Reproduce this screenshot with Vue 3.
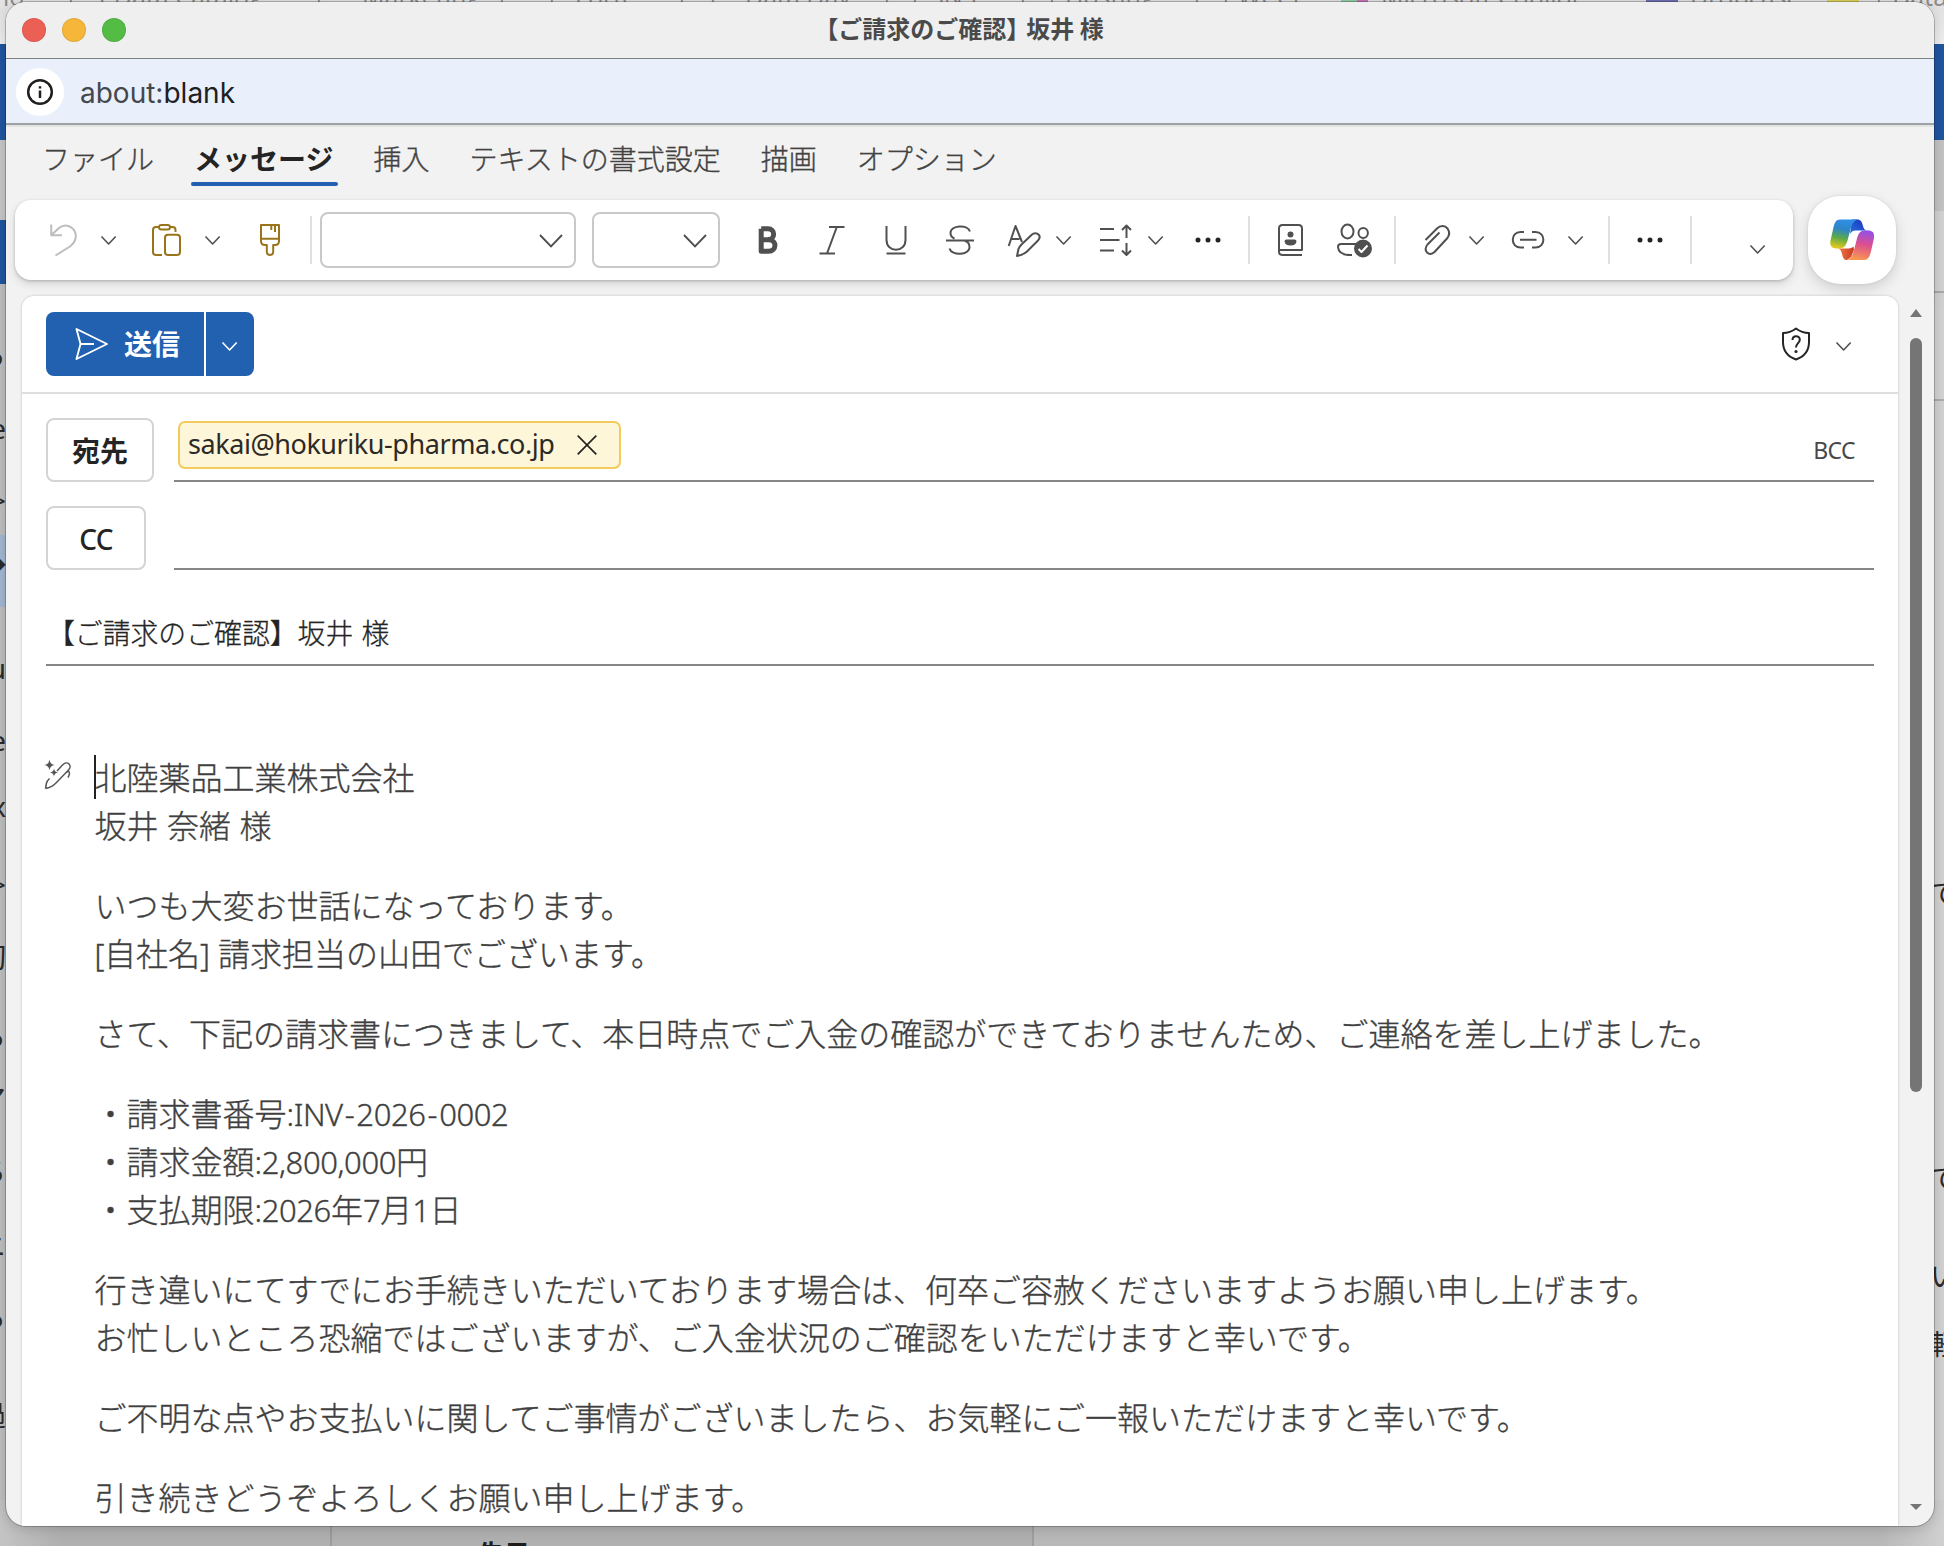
<script setup>
import { h } from 'vue'

const P = (d, o = {}) => ({ d, ...o })

const icons = {
  undo: { w: 28, h: 32, paths: [P('M1.2 .5V11.2H12M1.6 10.8L9 4C17-2.5 27 5 25.6 14C25 18 23 20 20 22.5L5.5 31.5')] },
  chevron: { w: 16, h: 10, sw: 1.6, paths: [P('M.5 1.500L7.600 9L14.700 1.500')] },
  paste: { w: 30, h: 32, paths: [
    P('M7 3H4Q1 3 1 6V28Q1 31 4 31H10M18 3H20.5Q23.500 3 23.5 6V8'),
    P('M9.500 1H15.500Q18 1 18 3.200T15.500 5.500H9.500Q7 5.500 7 3.200T9.500 1Z'),
    P('M16 10.800H25Q28 10.800 28 13.800V28Q28 31 25 31H16Q13 31 13 28V13.800Q13 10.800 16 10.800Z')] },
  brush: { w: 20, h: 32, paths: [P('M1 1H19V17Q19 21 15 21H13.200V28Q13 31 10 31Q7 31 6.800 28V21H5Q1 21 1 17ZM1 14.800H19M11.300 1V6M15 1V8')] },
  bold: { w: 20, h: 32, sw: 5, paths: [P('M3.200 4.800V27.200H10.500C19 27.200 19 15.800 11 15.800H3.200M3.200 4.800H10C17.500 4.800 17.500 15.500 10 15.500')] },
  italic: { w: 26, h: 32, paths: [P('M10 3H25.500M.5 29.500H16M17.800 3L8 29.500')] },
  underline: { w: 22, h: 32, paths: [P('M1.500 2V16C1.500 29 20.500 29 20.500 16V2M1.500 29.500H20.500')] },
  strike: { w: 28, h: 32, paths: [P('M0 16.500H28M24 7.500C21.500 0 4.500 1 4.500 9C4.500 12 6 13.500 8.500 14.500M3.500 24.500C5.500 32 23.500 31.500 23.500 23C23.500 19.500 21.500 17.500 18.500 16.500')] },
  textpen: { w: 32, h: 32, paths: [P('M.7 22L7.500 2L14 18M3.500 15H11.500'), P('M9 32L10.500 25C11 23 12 22 13.500 20.500L24 10.500C26 8.500 29 9 30.500 10.500C32 12 31.800 14.500 30 16.500L19 27.500C17 29.500 15.500 30.500 9 32Z')] },
  spacing: { w: 33, h: 32, paths: [P('M0 5H14M0 16H19.500M0 26.500H14M26.500 2V14M26.500 19V31M22 6L26.500 1.500L31 6M22 26.500L26.500 31L31 26.500')] },
  dots: { w: 26, h: 6, paths: [P('M.5 3a2.500 2.500 0 1 0 5 0a2.500 2.500 0 1 0-5 0M10.500 3a2.500 2.500 0 1 0 5 0a2.500 2.500 0 1 0-5 0M20.500 3a2.500 2.500 0 1 0 5 0a2.500 2.500 0 1 0-5 0', { solid: true })] },
  contact: { w: 26, h: 32, paths: [
    P('M24 31H4.500Q1 31 1 27.500V4.500Q1 1 4.500 1H20.500Q24 1 24 4.500V26H1.500'),
    P('M9.500 10.500a3 3 0 1 0 6 0a3 3 0 1 0-6 0M8.500 15.500H16.500Q18.500 15.500 18.500 17.500Q18 21.500 12.500 21.500T6.500 17.500Q6.500 15.500 8.500 15.500Z', { solid: true })] },
  people: { w: 36, h: 34, paths: [
    P('M4.500 8.500a6 7 0 1 0 12 0a6 7 0 1 0-12 0M21.500 10a4.700 5 0 1 0 9.400 0a4.700 5 0 1 0-9.400 0M19 21H4Q1 21 1 24Q1.500 32.500 15 32M22 20.500H28'),
    P('M17 25.500a9 9 0 1 0 18 0a9 9 0 1 0-18 0', { solid: true }),
    P('M21.500 26L24.500 29L30.500 22.500', { white: true })] },
  attach: { w: 26, h: 32, paths: [P('M1.500 16L13 4.500C16.500 1 21 1.500 23.500 4.500C26 8 25.500 11.500 23 14.500L10.500 28C8 30.500 5 30.500 3 28.500C1 26 1.500 23 3.500 20.500L15.500 8.500')] },
  link: { w: 34, h: 18, paths: [P('M12 1H8.500C-1.800 1-1.800 16.500 8.500 16.500H12M20 1H23.500C34 1 34 16.500 23.500 16.500H20M8 8.800H24.500')] },
  send: { w: 34, h: 32, sw: 1.9, paths: [P('M1.500 1L32 16L1.500 31L5.500 16ZM5.500 16H19')] },
  close: { w: 20, h: 20, sw: 1.700, paths: [P('M.7 .7L19.300 19.300M19.300 .7L.7 19.300')] },
  info: { w: 28, h: 28, sw: 2.500, paths: [P('M2.200 14a11.800 11.800 0 1 0 23.600 0a11.800 11.800 0 1 0-23.600 0M14 12.500V20M14 8.200V10.600')] },
  shield: { w: 30, h: 34, sw: 2, paths: [P('M15 1.500C19 4.500 23 6 28 6V15C28 24 23.500 29.500 15 32.500C6.500 29.500 2 24 2 15V6C7 6 11 4.500 15 1.500ZM11.500 13C11.500 8 18.800 8 18.800 12.800C18.800 16 15 16.500 15 20.500'), P('M13.400 24.500a1.600 1.600 0 1 0 3.200 0a1.600 1.600 0 1 0-3.200 0', { solid: true })] },
  magic: { w: 30, h: 32, sw: 1.500, paths: [
    P('M2.500 29.500L3.500 24C4 22 5 21 6.500 19.500M14 12L19.500 6C22 3.500 24.500 3.500 26 5C27.500 6.500 27.500 9 25.500 11L13 24C10.500 26.500 8.500 28.500 2.500 29.500M22 14.500L25.500 12C27 13.500 26.500 16 25 18.500'),
    P('M6.500 .5C7 4 8.500 5.500 12 6C8.500 6.500 7 8 6.500 11.500C6 8 4.500 6.500 1 6C4.500 5.500 6 4 6.500 .5ZM11 9.500C11.300 12 12.500 13 15 13.500C12.500 14 11.300 15 11 17.500C10.700 15 9.500 14 7 13.500C9.500 13 10.700 12 11 9.500Z', { solid: true })] },
}

const tools = [
  { icon: 'undo', gap: 35, cls: 'dim' }, { icon: 'chevron', gap: 23 },
  { icon: 'paste', gap: 35, cls: 'gold' }, { icon: 'chevron', gap: 23 },
  { icon: 'brush', gap: 39, cls: 'gold' }, { divider: true, gap: 30 },
  { select: 'font', gap: 8 }, { select: 'size', gap: 16 },
  { icon: 'bold', gap: 38 }, { icon: 'italic', gap: 41 }, { icon: 'underline', gap: 40 }, { icon: 'strike', gap: 39 },
  { icon: 'textpen', gap: 34 }, { icon: 'chevron', gap: 16 },
  { icon: 'spacing', gap: 28 }, { icon: 'chevron', gap: 15 },
  { icon: 'dots', gap: 31, cls: 'dark' }, { divider: true, gap: 27 },
  { icon: 'contact', gap: 28 }, { icon: 'people', gap: 33 }, { divider: true, gap: 21 },
  { icon: 'attach', gap: 28 }, { icon: 'chevron', gap: 19 },
  { icon: 'link', gap: 27 }, { icon: 'chevron', gap: 22 }, { divider: true, gap: 24 },
  { icon: 'dots', gap: 27, cls: 'dark' }, { divider: true, gap: 27 },
  { icon: 'chevron', gap: 58, cls: 'low' },
]

const tabs = ['ファイル', 'メッセージ', '挿入', 'テキストの書式設定', '描画', 'オプション']

const bookmarks = [
  { t: 'lo', x: 3 }, { t: '|', x: 64 }, { t: '( Data Catalog', x: 100 }, { t: '|', x: 312 }, { t: 'Marketing', x: 362 },
  { t: '|', x: 495 }, { t: '|', x: 545 }, { t: 'Forte', x: 575 }, { t: '|', x: 675 }, { t: '|', x: 706 }, { t: 'Data Day', x: 745 },
  { t: '|', x: 880 }, { t: '|', x: 908 }, { t: 'SNS', x: 930 }, { t: '|', x: 1016 }, { t: '|', x: 1045 }, { t: 'Hosting', x: 1065 },
  { t: '|', x: 1190 }, { t: '|', x: 1219 }, { t: 'WCCF', x: 1238 }, { t: 'Microsoft Copilot', x: 1381 }, { t: 'Dropcase', x: 1690 }, { t: '| Data', x: 1872 },
]
const leftBits = [['ら', 355], ['e', 428], ['>', 500], ['◆', 565], ['u', 668], ['e', 740], ['x', 806], ['>', 884], ['切', 957], ['る', 1036], ['マ', 1098], ['ち', 1171], ['ニ', 1246], ['る', 1317], ['過', 1415]]
const rightBits = [['で', 893], ['で', 1178], ['い', 1276], ['軽', 1344]]

const body = [
  [['北陸薬品工業株式会社'], ['坂井', ' ', '奈緒', ' ', '様']],
  [['いつも大変お世話になっております。'], ['[', '自社名', '] ', '請求担当の山田でございます。']],
  [['さて、下記の請求書につきまして、本日時点でご入金の確認ができておりませんため、ご連絡を差し上げました。']],
  [['・請求書番号', ':INV', '-', '2026', '-', '0002'], ['・請求金額', ':2,800,000', '円'], ['・支払期限', ':2026', '年', '7', '月', '1', '日']],
  [['行き違いにてすでにお手続きいただいております場合は、何卒ご容赦くださいますようお願い申し上げます。'], ['お忙しいところ恐縮ではございますが、ご入金状況のご確認をいただけますと幸いです。']],
  [['ご不明な点やお支払いに関してご事情がございましたら、お気軽にご一報いただけますと幸いです。']],
  [['引き続きどうぞよろしくお願い申し上げます。']],
]
const isLatin = (s) => /^[\x20-\x7e]+$/.test(s)

const Icon = (props) => {
  const ic = icons[props.name]
  return h('svg', { class: 'icon', width: ic.w, height: ic.h, viewBox: `0 0 ${ic.w} ${ic.h}` },
    ic.paths.map((p) => h('path', {
      d: p.d,
      fill: p.solid ? 'currentColor' : 'none',
      stroke: p.solid ? 'none' : p.white ? '#fff' : 'currentColor',
      'stroke-width': ic.sw || 2,
      'stroke-linejoin': 'round',
      'stroke-linecap': 'butt',
    })))
}
Icon.props = ['name']
</script>

<template>
  <div class="desktop">
    <div class="backdrop" aria-hidden="true">
      <span v-for="(b, i) in bookmarks" :key="'b' + i" class="bookmark" :style="{ left: b.x + 'px' }">{{ b.t }}</span>
      <i class="fav green"></i><i class="fav pink"></i><i class="fav indigo"></i><i class="fav yellow"></i>
      <i class="band blue top"></i><i class="band grey"></i><i class="band blue mid"></i><i class="band sel"></i>
      <i class="rband blue"></i><i class="rband a"></i><i class="rband b"></i><i class="rband c"></i>
      <span v-for="(b, i) in leftBits" :key="'l' + i" class="bit left" :style="{ top: b[1] - 20 + 'px' }">{{ b[0] }}</span>
      <span v-for="(b, i) in rightBits" :key="'r' + i" class="bit right" :style="{ top: b[1] - 20 + 'px' }">{{ b[0] }}</span>
      <i class="below"></i>
      <span class="below-text">先日</span>
    </div>

    <main class="window">
      <header class="titlebar">
        <div class="lights"><i class="red"></i><i class="amber"></i><i class="green"></i></div>
        <h1>【ご請求のご確認】<span>坂井 様</span></h1>
      </header>
      <div class="address">
        <span class="info"><Icon name="info" /></span>
        <span class="url"><em>about:</em>blank</span>
      </div>

      <div class="client">
        <nav class="tabs">
          <a v-for="(t, i) in tabs" :key="t" :class="{ active: i === 1 }">{{ t }}</a>
        </nav>

        <div class="ribbon">
          <div class="toolbar">
            <template v-for="(t, i) in tools" :key="i">
              <span v-if="t.divider" class="divider" :style="{ marginLeft: t.gap + 'px' }"></span>
              <span v-else-if="t.select" class="select" :class="t.select" :style="{ marginLeft: t.gap + 'px' }">
                <svg width="24" height="14" viewBox="0 0 24 14"><path d="M1 1L12 12.500L23 1" fill="none" stroke="#505050" stroke-width="1.900" /></svg>
              </span>
              <span v-else class="tool" :class="t.cls" :style="{ marginLeft: t.gap + 'px' }"><Icon :name="t.icon" /></span>
            </template>
          </div>
          <button class="copilot">
            <svg width="45" height="42" viewBox="0 0 45 42">
              <defs>
                <linearGradient id="cpL" x1=".6" y1="0" x2=".4" y2="1">
                  <stop offset="0" stop-color="#2f8fe8" /><stop offset=".35" stop-color="#2e86c8" /><stop offset=".65" stop-color="#5aa84a" /><stop offset="1" stop-color="#e2c81c" />
                </linearGradient>
                <linearGradient id="cpR" x1=".6" y1="0" x2=".4" y2="1">
                  <stop offset="0" stop-color="#9450e6" /><stop offset=".45" stop-color="#dd4f8e" /><stop offset="1" stop-color="#f9994f" />
                </linearGradient>
                <linearGradient id="cpB" x1="0" y1="1" x2="1" y2="0">
                  <stop offset="0" stop-color="#2a6fe0" /><stop offset="1" stop-color="#1632b8" />
                </linearGradient>
                <linearGradient id="cpO" x1="0" y1="0" x2="1" y2="0">
                  <stop offset="0" stop-color="#f07a45" /><stop offset="1" stop-color="#c93a24" />
                </linearGradient>
              </defs>
              <path fill="url(#cpB)" d="M22 .5H27C31 .5 32 3 33 7C33.700 10 35 11.500 38 11.500H25.500C23 11.500 21.500 12.500 20 15Z" />
              <path fill="url(#cpO)" d="M8 29.500H17C20 29.500 22 29 23.500 27.500L24 31L21 38L17 41C14 41 13 39 12 35C11.300 32 10.500 30 8 29.500Z" />
              <path fill="url(#cpL)" d="M10 .5H28C23.500 1.500 21.500 6 20.300 11L17.500 21.500C16 27 13.500 29.500 9 29.500H6.500C1 29.500-.5 26 .6 21L3.200 9.500C4.600 3.500 6 .5 10 .5Z" />
              <path fill="url(#cpR)" d="M35 11.500H38C43.500 11.500 44.800 15 43.800 20L41.200 31.500C39.800 38 38 41 34 41H17C21 40 23 35.500 24.200 30.500L27 19.500C28.500 14 30.500 11.500 35 11.500Z" />
            </svg>
          </button>
        </div>

        <div class="scroller">
          <section class="compose">
            <div class="actions">
              <div class="send">
                <button class="send-main"><Icon name="send" /><span>送信</span></button>
                <button class="send-more"><Icon name="chevron" /></button>
              </div>
              <div class="protect"><Icon name="shield" /><Icon name="chevron" /></div>
            </div>

            <div class="row to">
              <button class="label">宛先</button>
              <div class="field">
                <span class="chip"><span class="addr">sakai@hokuriku-pharma.co.jp</span><Icon name="close" /></span>
                <span class="bcc">BCC</span>
              </div>
            </div>
            <div class="row cc">
              <button class="label">CC</button>
              <div class="field"></div>
            </div>
            <div class="subject">【ご請求のご確認】坂井 様</div>

            <div class="editor">
              <span class="magic"><Icon name="magic" /></span>
              <i class="caret"></i>
              <p v-for="(para, i) in body" :key="i">
                <span v-for="(line, j) in para" :key="j" class="line"><span v-for="(s, k) in line" :key="k" :class="{ latin: isLatin(s), dash: s === '-' }">{{ s }}</span></span>
              </p>
            </div>
          </section>
          <div class="scrollbar">
            <svg width="12" height="8" viewBox="0 0 12 8"><path d="M6 0L12 8H0Z" fill="#757575" /></svg>
            <div class="thumb"></div>
            <svg class="down" width="12" height="6" viewBox="0 0 12 6"><path d="M6 6L0 0H12Z" fill="#757575" /></svg>
          </div>
        </div>
      </div>
    </main>
  </div>
</template>

<style scoped>
.desktop {
  position: relative;
  width: 1944px;
  height: 1546px;
  overflow: hidden;
  background: #c6c6c6;
  font-family: "Noto Sans", "Noto Sans CJK JP", sans-serif;
  color: #242424;
}
.backdrop {
  position: absolute;
  inset: 0;
  background: linear-gradient(#e3e3e3 0 10px, #f0f0f0 44px, transparent 44px),
    linear-gradient(90deg, #bfbfbf 0 50%, #d2d2d2 50%);
}
.bookmark {
  position: absolute;
  top: -20px;
  font: 25px/32px "Open Sans", sans-serif;
  color: #8b8b8b;
  white-space: nowrap;
}
.fav { position: absolute; top: 0; height: 7px; }
.fav.green { left: 1341px; width: 16px; background: #93cba4; }
.fav.pink { left: 1357px; width: 11px; background: #c876bd; }
.fav.indigo { left: 1646px; width: 32px; background: #6f70b4; }
.fav.yellow { left: 1827px; width: 32px; background: #dcd45f; }
.band, .rband { position: absolute; left: 0; width: 8px; }
.rband { left: 1932px; width: 12px; }
.band.blue, .rband.blue { background: #2155a0; }
.band.top { top: 44px; height: 96px; }
.band.grey { top: 140px; height: 80px; background: #c8c8c8; }
.band.mid { top: 220px; height: 64px; }
.band.sel { top: 535px; height: 72px; background: #a3b9d2; }
.rband.blue { top: 44px; height: 96px; }
.rband.a { top: 140px; height: 71px; background: #c4c4c4; }
.rband.b { top: 211px; height: 80px; background: #d3d3d3; border-bottom: 2px solid #a9a9a9; }
.rband.c { top: 307px; height: 92px; background: #d4d4d4; border-bottom: 2px solid #adadad; }
.bit {
  position: absolute;
  font-size: 28px;
  line-height: 40px;
  color: #2b2b2b;
}
.bit.left { right: 1938px; }
.bit.right { left: 1930px; }
.below {
  position: absolute;
  left: 0;
  right: 0;
  top: 1500px;
  bottom: 0;
  background: linear-gradient(90deg, #c4c4c4, #b0b0b0 60px, #b0b0b0 330px, transparent 330px),
    linear-gradient(90deg, transparent 330px, #9b9b9b 330px 332px, #b0b0b0 332px 1032px, #9e9e9e 1032px 1034px, #b8b8b8 1034px 1880px, #d0d0d0);
}
.below-text {
  position: absolute;
  left: 478px;
  top: 1535px;
  font: bold 26px/36px "Noto Sans CJK JP", sans-serif;
  color: #1c1c1c;
}

.window {
  position: absolute;
  left: 6px;
  top: 2px;
  width: 1928px;
  height: 1524px;
  border-radius: 20px;
  overflow: hidden;
  background: #f2f2f2;
  box-shadow: 0 0 0 1px rgba(0, 0, 0, .22), 0 2px 14px rgba(0, 0, 0, .18);
  display: flex;
  flex-direction: column;
}
.titlebar {
  flex: none;
  height: 56px;
  display: flex;
  align-items: center;
  background: #efefef;
  border-bottom: 1px solid #7b827f;
  position: relative;
}
.lights { display: flex; gap: 16px; padding-left: 16px; }
.lights i { width: 24px; height: 24px; border-radius: 50%; box-sizing: border-box; border: 1px solid rgba(0, 0, 0, .08); }
.lights .red { background: #ec5f54; }
.lights .amber { background: #f5b63a; }
.lights .green { background: #54bc45; }
.titlebar h1 {
  position: absolute;
  left: 0;
  right: 10px;
  top: 8px;
  margin: 0;
  text-align: center;
  font: bold 24px/36px "Noto Sans CJK JP", sans-serif;
  font-feature-settings: "halt";
  color: #4a4a4a;
}
.titlebar h1 span { margin-left: 8px; }
.address {
  flex: none;
  height: 64px;
  display: flex;
  align-items: center;
  background: #eaf0fb;
  border-bottom: 2px solid #9da1a6;
}
.info {
  width: 48px;
  height: 48px;
  margin: 2px 0 0 10px;
  border-radius: 50%;
  background: #fff;
  color: #1f1f1f;
  display: grid;
  place-items: center;
}
.url {
  margin: 3px 0 0 16px;
  font: 28px/40px Inter, sans-serif;
  color: #1d2025;
}
.url em { font-style: normal; color: #44484e; }

.client { flex: 1; display: flex; flex-direction: column; border-top: 2px solid #e2e4df; min-height: 0; }
.tabs {
  flex: none;
  height: 73px;
  display: flex;
  gap: 40px;
  padding-left: 36px;
  font: 28px/40px "Noto Sans CJK JP", sans-serif;
  color: #424242;
}
.tabs a { position: relative; margin-top: 11px; height: 50px; white-space: nowrap; font-weight: 300; -webkit-text-stroke: .35px currentColor; }
.tabs a.active { font-weight: 700; color: #242424; -webkit-text-stroke: 0; }
.tabs a.active::after {
  content: "";
  position: absolute;
  left: -3px;
  right: -5px;
  top: 44px;
  height: 4px;
  border-radius: 2px;
  background: #2360b1;
}
.ribbon { flex: none; display: flex; align-items: center; padding-left: 9px; height: 80px; }
.toolbar {
  flex: none;
  width: 1778px;
  height: 80px;
  border-radius: 16px;
  background: #fff;
  box-shadow: 0 1px 3px rgba(0, 0, 0, .2), 0 4px 8px rgba(0, 0, 0, .12);
  display: flex;
  align-items: center;
}
:deep(.icon) { flex: none; display: block; overflow: visible; }
.tool { flex: none; color: #505050; }
.tool.dim { color: #bdbdbd; }
.tool.gold { color: #99741a; }
.tool.dark { color: #242424; }
.tool.low { padding-top: 17px; }
.divider { flex: none; width: 2px; height: 48px; background: #e0e0e0; }
.select {
  flex: none;
  box-sizing: border-box;
  height: 56px;
  border: 2px solid #c9c9c9;
  border-radius: 8px;
  display: flex;
  align-items: center;
  justify-content: flex-end;
  padding: 2px 11px 0 0;
}
.select.font { width: 256px; }
.select.size { width: 128px; }
button { font: inherit; color: inherit; border: 0; margin: 0; padding: 0; background: none; }
.copilot {
  flex: none;
  width: 88px;
  height: 88px;
  margin-left: 15px;
  border-radius: 32px;
  background: #fff;
  box-shadow: 0 0 3px rgba(0, 0, 0, .1), 0 5px 14px rgba(0, 0, 0, .14);
  display: grid;
  place-items: center;
}

.scroller { flex: 1; min-height: 0; display: flex; margin-top: 16px; }
.compose {
  width: 1876px;
  margin-left: 16px;
  border-radius: 12px 12px 0 0;
  background: #fff;
  box-shadow: 0 0 3px rgba(0, 0, 0, .2);
  overflow: hidden;
}
.actions {
  height: 96px;
  border-bottom: 2px solid #dedede;
  display: flex;
  justify-content: space-between;
  padding: 0 46px 0 24px;
}
.send {
  margin-top: 16px;
  height: 64px;
  width: 208px;
  border-radius: 8px;
  overflow: hidden;
  background: #2260b0;
  color: #fff;
  display: flex;
}
.send-main { width: 160px; display: flex; align-items: center; padding-left: 29px; border-right: 2px solid #fff; font: bold 28px/40px "Noto Sans CJK JP", sans-serif; }
.send-main span { margin: -2px 0 0 15px; }
.send-more { flex: 1; display: grid; place-items: center; padding: 4px 1px 0 0; }
.protect { display: flex; align-items: center; gap: 25px; color: #242424; }
.protect .icon:last-child { margin-top: 3px; color: #505050; }
.row { display: flex; padding-left: 24px; padding-right: 24px; }
.row.to { margin-top: 24px; }
.row.cc { margin-top: 24px; }
.label {
  box-sizing: border-box;
  height: 64px;
  border: 2px solid #d4d4d4;
  border-radius: 8px;
  font: bold 28px/60px "Noto Sans CJK JP", sans-serif;
  color: #242424;
}
.to .label { width: 108px; margin-right: 20px; padding-bottom: 2px; }
.cc .label { width: 100px; margin-right: 28px; font: 500 28px/60px "Noto Sans", sans-serif; letter-spacing: -.8px; padding-top: 1px; }
.field {
  box-sizing: border-box;
  flex: 1;
  height: 64px;
  border-bottom: 2px solid #868686;
  display: flex;
  justify-content: space-between;
  align-items: flex-start;
}
.chip {
  box-sizing: border-box;
  margin: 3px 0 0 4px;
  width: 443px;
  height: 48px;
  border: 2px solid #f2cb5c;
  border-radius: 7px;
  background: #fef6d9;
  display: flex;
  align-items: center;
  padding-left: 8px;
  font: 27px/40px "Noto Sans", sans-serif;
}
.addr { width: 389px; margin-top: -2px; white-space: nowrap; letter-spacing: -.44px; color: #2c2a26; }
.bcc { margin: 16px 19px 0 0; font: 23px/32px "Noto Sans", sans-serif; letter-spacing: -.6px; color: #484848; }
.subject {
  box-sizing: border-box;
  margin: 32px 24px 0;
  height: 64px;
  border-bottom: 2px solid #868686;
  font: 300 27.850px/60px "Noto Sans CJK JP", sans-serif;
  padding-left: 1px;
  word-spacing: 2px;
  color: #242424;
  -webkit-text-stroke: .3px currentColor;
}
.editor { position: relative; padding: 86px 0 0 72.500px; color: #3f3f3f; font-weight: 300; font-size: 32px; line-height: 48px; font-family: "Noto Sans CJK JP", sans-serif; -webkit-text-stroke: .35px currentColor; }
.editor p { margin: 0 0 32px; }
.line { display: block; white-space: pre; height: 48px; }
.latin { font-family: "Noto Sans", sans-serif; font-weight: 300; font-size: 31px; letter-spacing: -.4px; word-spacing: .8px; }
.latin.dash { padding: 0 2px; }
.magic { position: absolute; left: 21px; top: 93px; color: #555; }
.caret { position: absolute; left: 72px; top: 89px; width: 2px; height: 44px; background: #222; }

.scrollbar { flex: none; width: 36px; display: flex; flex-direction: column; align-items: center; padding-top: 13px; }
.thumb { width: 12px; height: 754px; margin-top: 21px; border-radius: 6px; background: #757575; }
.scrollbar .down { margin-top: 412px; }
</style>

<style>
body { margin: 0; background: #c6c6c6; }
</style>
